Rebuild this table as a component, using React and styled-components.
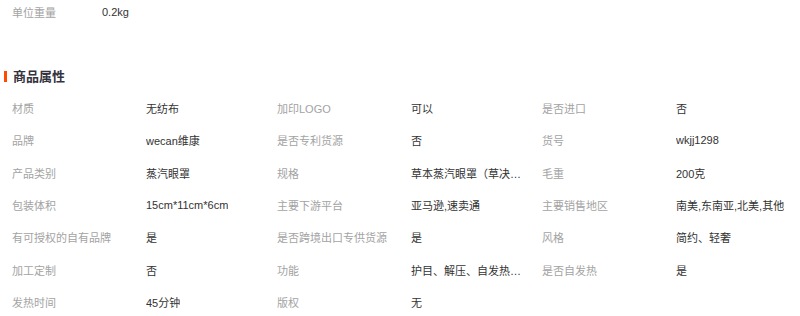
import React from 'react';
import styled, { createGlobalStyle } from 'styled-components';

const GlobalStyle = createGlobalStyle`
  body {
    margin: 0;
    background: #fff;
    font-family: 'Liberation Sans', 'Noto Sans CJK SC', sans-serif;
    font-size: 11px;
  }
`;

const Page = styled.div`
  width: 800px;
  height: 316px;
  overflow: hidden;
`;

const WeightRow = styled.div`
  display: flex;
  align-items: center;
  height: 24px;
  padding-left: 12px;
`;

const Label = styled.div`
  width: ${({ width }) => width}px;
  flex-shrink: 0;
  color: #a3a3a3;
  white-space: nowrap;
`;

const Value = styled.div`
  max-width: 118px;
  color: #333;
  white-space: nowrap;
  overflow: hidden;
  text-overflow: ellipsis;
`;

const Heading = styled.h3`
  position: relative;
  margin: 43px 0 0;
  height: 20px;
  line-height: 20px;
  padding-left: 13px;
  font-size: 13px;
  font-weight: bold;
  color: #33333d;

  &::before {
    content: '';
    position: absolute;
    left: 4px;
    top: 4px;
    width: 3px;
    height: 11px;
    background: #ff4a00;
  }
`;

const Grid = styled.div`
  display: grid;
  grid-template-columns: repeat(3, 265px);
  grid-auto-rows: 32.33px;
  margin-top: 5px;
  padding-left: 12px;
`;

const Cell = styled.div`
  display: flex;
  align-items: center;
`;

const attrs = [
  ['材质', '无纺布'],
  ['加印LOGO', '可以'],
  ['是否进口', '否'],
  ['品牌', 'wecan维康'],
  ['是否专利货源', '否'],
  ['货号', 'wkjj1298'],
  ['产品类别', '蒸汽眼罩'],
  ['规格', '草本蒸汽眼罩（草决明）'],
  ['毛重', '200克'],
  ['包装体积', '15cm*11cm*6cm'],
  ['主要下游平台', '亚马逊,速卖通'],
  ['主要销售地区', '南美,东南亚,北美,其他'],
  ['有可授权的自有品牌', '是'],
  ['是否跨境出口专供货源', '是'],
  ['风格', '简约、轻奢'],
  ['加工定制', '否'],
  ['功能', '护目、解压、自发热、缓解疲劳'],
  ['是否自发热', '是'],
  ['发热时间', '45分钟'],
  ['版权', '无'],
];

export default function App() {
  return (
    <Page>
      <GlobalStyle />
      <WeightRow>
        <Label width={90}>单位重量</Label>
        <Value>0.2kg</Value>
      </WeightRow>
      <Heading>商品属性</Heading>
      <Grid>
        {attrs.map(([k, v]) => (
          <Cell key={k}>
            <Label width={134}>{k}</Label>
            <Value>{v}</Value>
          </Cell>
        ))}
      </Grid>
    </Page>
  );
}
